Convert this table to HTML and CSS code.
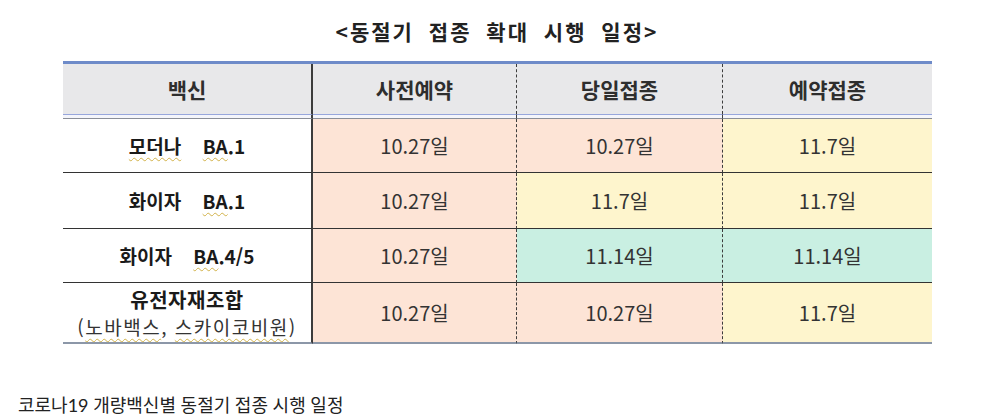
FILE: index.html
```html
<!DOCTYPE html>
<html lang="ko">
<head>
<meta charset="utf-8">
<title>동절기 접종 확대 시행 일정</title>
<link rel="stylesheet" href="styles.css">
</head>
<body>
<div class="page">
  <h1 class="title">&lt;동절기 접종 확대 시행 일정&gt;</h1>
  <div class="tbl">
    <div class="row head">
      <div class="cell c1">백신</div>
      <div class="cell c2">사전예약</div>
      <div class="cell c3">당일접종</div>
      <div class="cell c4">예약접종</div>
    </div>
    <div class="row sep">
      <div class="cell c1"></div>
      <div class="cell c2"></div>
      <div class="cell c3"></div>
      <div class="cell c4"></div>
    </div>
    <div class="row r1">
      <div class="cell c1 label"><span class="txt"><span class="sq">모더나</span> <span class="sq">BA</span>.1</span></div>
      <div class="cell c2 pink">10.27일</div>
      <div class="cell c3 pink">10.27일</div>
      <div class="cell c4 yellow">11.7일</div>
    </div>
    <div class="row r2">
      <div class="cell c1 label"><span class="txt">화이자 <span class="sq">BA</span>.1</span></div>
      <div class="cell c2 pink">10.27일</div>
      <div class="cell c3 yellow">11.7일</div>
      <div class="cell c4 yellow">11.7일</div>
    </div>
    <div class="row r3">
      <div class="cell c1 label"><span class="txt">화이자 <span class="sq">BA</span>.4/5</span></div>
      <div class="cell c2 pink">10.27일</div>
      <div class="cell c3 mint">11.14일</div>
      <div class="cell c4 mint">11.14일</div>
    </div>
    <div class="row r4">
      <div class="cell c1 label multi">
        <span class="line1">유전자재조합</span>
        <span class="line2">(<span class="sq">노바백스</span>, <span class="sq">스카이코비원</span>)</span>
      </div>
      <div class="cell c2 pink">10.27일</div>
      <div class="cell c3 pink">10.27일</div>
      <div class="cell c4 yellow">11.7일</div>
    </div>
  </div>
  <p class="caption">코로나19 개량백신별 동절기 접종 시행 일정</p>
</div>
</body>
</html>
```

FILE: styles.css
```css
html, body {
  margin: 0;
  padding: 0;
  background: #ffffff;
}

body {
  font-family: "Noto Sans CJK KR", "Noto Sans", sans-serif;
  color: #333333;
}

.page {
  width: 994px;
}

.title {
  margin: 0;
  height: 61px;
  padding-top: 1px;
  box-sizing: border-box;
  display: flex;
  align-items: center;
  justify-content: center;
  font-size: 21px;
  font-weight: 700;
  letter-spacing: 2px;
  word-spacing: 7px;
  color: #222222;
}

.tbl {
  margin-left: 63px;
  width: 869px;
  border-top: 3px solid #6e8bc9;
}

.row {
  display: flex;
}

.cell {
  display: flex;
  align-items: center;
  justify-content: center;
  box-sizing: border-box;
  font-size: 20px;
  line-height: 1;
}

.c1 {
  width: 250px;
  border-right: 2px solid #3c3c3c;
}

.c2 {
  width: 204px;
  border-right: 1px dashed #3c3c3c;
}

.c3 {
  width: 206px;
  border-right: 1px dashed #3c3c3c;
}

.c4 {
  width: 209px;
}

.head .cell {
  height: 50px;
  background: #e8e8ea;
  font-size: 21px;
  font-weight: 700;
  color: #2e2e2e;
}

.sep .cell {
  height: 5px;
  border-top: 1px solid #97a6dc;
  border-bottom: 1px solid #8a8e98;
  background: #f4f5fb;
}

.r1 .cell { height: 54px; border-bottom: 1px solid #333333; }
.r2 .cell { height: 56px; border-bottom: 1px solid #333333; }
.r3 .cell { height: 54px; border-bottom: 1px solid #333333; }
.r4 .cell { height: 61px; border-bottom: 2px solid #8c97a8; }

.pink { background: #fde4d6; }
.yellow { background: #fef5cd; }
.mint { background: #c9efe2; }

.label {
  font-size: 19px;
  font-weight: 700;
  color: #1a1a1a;
}

.txt {
  word-spacing: 16px;
}

.multi {
  flex-direction: column;
}

.line1 {
  display: block;
  line-height: 27px;
  font-size: 20px;
  letter-spacing: 0.5px;
}

.line2 {
  display: block;
  line-height: 27px;
  font-size: 19px;
  letter-spacing: 1.5px;
  font-weight: 400;
  color: #333333;
}

.sq {
  text-decoration: underline wavy #d2b24a;
  text-decoration-thickness: 1px;
  text-underline-offset: 3px;
}

.caption {
  margin: 50px 0 0 18px;
  font-family: Lato, "Noto Sans CJK KR", sans-serif;
  font-size: 18px;
  line-height: 22px;
  color: #222222;
}
```
